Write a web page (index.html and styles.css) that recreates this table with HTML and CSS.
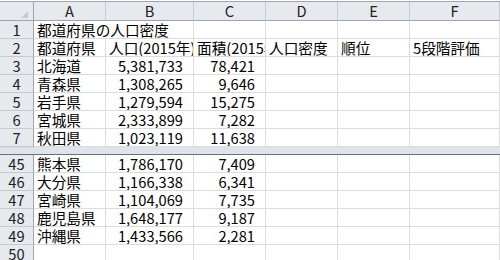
FILE: index.html
```html
<!DOCTYPE html>
<html lang="ja">
<head>
<meta charset="utf-8">
<link rel="stylesheet" href="styles.css">
</head>
<body>
<div class="sheet">
  <div class="row hdr">
    <div class="corner"><svg class="tri" width="7" height="7" viewBox="0 0 7 7"><polygon points="7,0 7,7 0,7" fill="#c3c9d2"/></svg></div>
    <div class="ch">A</div><div class="ch">B</div><div class="ch">C</div><div class="ch">D</div><div class="ch">E</div><div class="ch">F</div><div class="ch"></div>
  </div>
  <div class="row"><div class="rh">1</div><div class="c span2">都道府県の人口密度</div><div class="c"></div><div class="c"></div><div class="c"></div><div class="c"></div><div class="c"></div></div>
  <div class="row"><div class="rh">2</div><div class="c">都道府県</div><div class="c">人口(2015年)</div><div class="c">面積(2015年)</div><div class="c">人口密度</div><div class="c"><span class="t">順位</span></div><div class="c">5段階評価</div><div class="c"></div></div>
  <div class="row"><div class="rh">3</div><div class="c">北海道</div><div class="c n">5,381,733</div><div class="c n">78,421</div><div class="c"></div><div class="c"></div><div class="c"></div><div class="c"></div></div>
  <div class="row"><div class="rh">4</div><div class="c">青森県</div><div class="c n">1,308,265</div><div class="c n">9,646</div><div class="c"></div><div class="c"></div><div class="c"></div><div class="c"></div></div>
  <div class="row"><div class="rh">5</div><div class="c">岩手県</div><div class="c n">1,279,594</div><div class="c n">15,275</div><div class="c"></div><div class="c"></div><div class="c"></div><div class="c"></div></div>
  <div class="row"><div class="rh">6</div><div class="c">宮城県</div><div class="c n">2,333,899</div><div class="c n">7,282</div><div class="c"></div><div class="c"></div><div class="c"></div><div class="c"></div></div>
  <div class="row"><div class="rh">7</div><div class="c">秋田県</div><div class="c n">1,023,119</div><div class="c n">11,638</div><div class="c"></div><div class="c"></div><div class="c"></div><div class="c"></div></div>
  <div class="split"></div>
  <div class="row"><div class="rh">45</div><div class="c">熊本県</div><div class="c n">1,786,170</div><div class="c n">7,409</div><div class="c"></div><div class="c"></div><div class="c"></div><div class="c"></div></div>
  <div class="row"><div class="rh">46</div><div class="c">大分県</div><div class="c n">1,166,338</div><div class="c n">6,341</div><div class="c"></div><div class="c"></div><div class="c"></div><div class="c"></div></div>
  <div class="row"><div class="rh">47</div><div class="c">宮崎県</div><div class="c n">1,104,069</div><div class="c n">7,735</div><div class="c"></div><div class="c"></div><div class="c"></div><div class="c"></div></div>
  <div class="row"><div class="rh">48</div><div class="c">鹿児島県</div><div class="c n">1,648,177</div><div class="c n">9,187</div><div class="c"></div><div class="c"></div><div class="c"></div><div class="c"></div></div>
  <div class="row"><div class="rh">49</div><div class="c">沖縄県</div><div class="c n">1,433,566</div><div class="c n">2,281</div><div class="c"></div><div class="c"></div><div class="c"></div><div class="c"></div></div>
  <div class="row"><div class="rh">50</div><div class="c"></div><div class="c"></div><div class="c"></div><div class="c"></div><div class="c"></div><div class="c"></div><div class="c"></div></div>
</div>
</body>
</html>
```
FILE: styles.css
```css
* { box-sizing: border-box; }
html, body { margin: 0; padding: 0; background: #fff; }
body {
  font-family: "Noto Sans CJK JP", "Noto Sans", sans-serif;
  font-size: 14.67px;
  color: #000;
}
.sheet {
  width: 500px;
  height: 260px;
  overflow: hidden;
  padding-top: 1px;
  background: #fff;
}
.row {
  display: grid;
  grid-template-columns: 34px 72px 88px 72px 72px 72px 1fr;
  height: 18px;
}
.hdr {
  height: 20px;
  border-top: 1px solid #9ea5af;
}
.corner, .ch {
  background: #e6e9ee;
  border-right: 1px solid #c5cad1;
  border-bottom: 1px solid #9ea5af;
  height: 19px;
}
.corner {
  border-right-color: #9ea5af;
  display: flex;
  justify-content: flex-end;
  align-items: flex-end;
  padding: 0 5px 2px 0;
}
.tri { display: block; }
.ch {
  text-align: center;
  line-height: 18px;
  color: #222;
}
.rh {
  background: #e6e9ee;
  border-right: 1px solid #9ea5af;
  border-bottom: 1px solid #c5cad1;
  text-align: center;
  line-height: 17px;
  color: #222;
}
.c {
  border-right: 1px solid #dadcdd;
  border-bottom: 1px solid #dadcdd;
  padding: 0 0 0 3px;
  line-height: 17px;
  white-space: nowrap;
  overflow: hidden;
  color: #000;
}
.t {
  color: #000;
  font-family: "Noto Sans CJK JP", sans-serif;
}
.span2 { grid-column: span 2; }
.n {
  text-align: right;
  padding: 0 10px 0 0;
}
.split {
  height: 8px;
  background: #dfe3eb;
  border-bottom: 1px solid #6f6f6f;
}
```
